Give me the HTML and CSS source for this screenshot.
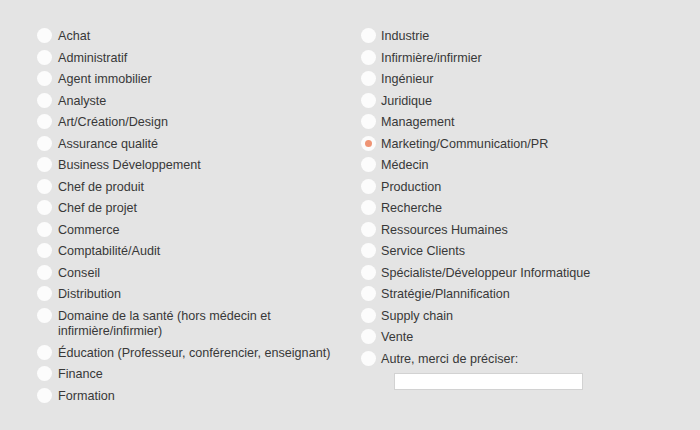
FILE: index.html
```html
<!DOCTYPE html>
<html lang="fr">
<head>
<meta charset="utf-8">
<title>Secteur</title>
<link rel="stylesheet" href="styles.css">
</head>
<body>
<form class="choices">
  <div class="col">
    <label class="row"><span class="radio"></span><span class="txt">Achat</span></label>
    <label class="row"><span class="radio"></span><span class="txt">Administratif</span></label>
    <label class="row"><span class="radio"></span><span class="txt">Agent immobilier</span></label>
    <label class="row"><span class="radio"></span><span class="txt">Analyste</span></label>
    <label class="row"><span class="radio"></span><span class="txt">Art/Création/Design</span></label>
    <label class="row"><span class="radio"></span><span class="txt">Assurance qualité</span></label>
    <label class="row"><span class="radio"></span><span class="txt">Business Développement</span></label>
    <label class="row"><span class="radio"></span><span class="txt">Chef de produit</span></label>
    <label class="row"><span class="radio"></span><span class="txt">Chef de projet</span></label>
    <label class="row"><span class="radio"></span><span class="txt">Commerce</span></label>
    <label class="row"><span class="radio"></span><span class="txt">Comptabilité/Audit</span></label>
    <label class="row"><span class="radio"></span><span class="txt">Conseil</span></label>
    <label class="row"><span class="radio"></span><span class="txt">Distribution</span></label>
    <label class="row"><span class="radio"></span><span class="txt">Domaine de la santé (hors médecin et<br>infirmière/infirmier)</span></label>
    <label class="row"><span class="radio"></span><span class="txt">Éducation (Professeur, conférencier, enseignant)</span></label>
    <label class="row"><span class="radio"></span><span class="txt">Finance</span></label>
    <label class="row"><span class="radio"></span><span class="txt">Formation</span></label>
  </div>
  <div class="col">
    <label class="row"><span class="radio"></span><span class="txt">Industrie</span></label>
    <label class="row"><span class="radio"></span><span class="txt">Infirmière/infirmier</span></label>
    <label class="row"><span class="radio"></span><span class="txt">Ingénieur</span></label>
    <label class="row"><span class="radio"></span><span class="txt">Juridique</span></label>
    <label class="row"><span class="radio"></span><span class="txt">Management</span></label>
    <label class="row"><span class="radio checked"></span><span class="txt">Marketing/Communication/PR</span></label>
    <label class="row"><span class="radio"></span><span class="txt">Médecin</span></label>
    <label class="row"><span class="radio"></span><span class="txt">Production</span></label>
    <label class="row"><span class="radio"></span><span class="txt">Recherche</span></label>
    <label class="row"><span class="radio"></span><span class="txt">Ressources Humaines</span></label>
    <label class="row"><span class="radio"></span><span class="txt">Service Clients</span></label>
    <label class="row"><span class="radio"></span><span class="txt">Spécialiste/Développeur Informatique</span></label>
    <label class="row"><span class="radio"></span><span class="txt">Stratégie/Plannification</span></label>
    <label class="row"><span class="radio"></span><span class="txt">Supply chain</span></label>
    <label class="row"><span class="radio"></span><span class="txt">Vente</span></label>
    <label class="row"><span class="radio"></span><span class="txt">Autre, merci de préciser:</span></label>
    <div class="other"><input class="other-input" type="text"></div>
  </div>
</form>
</body>
</html>
```
FILE: styles.css
```css
html, body {
  margin: 0;
  padding: 0;
  background: #e4e4e4;
}
body {
  font-family: "Liberation Sans", Arial, sans-serif;
  font-size: 12.6px;
  color: #383838;
  width: 700px;
  height: 430px;
  overflow: hidden;
}
.choices {
  display: grid;
  grid-template-columns: 324px 1fr;
  padding: 26px 0 0 37px;
  margin: 0;
}
.col {
  display: flex;
  flex-direction: column;
}
.row {
  display: flex;
  align-items: flex-start;
  gap: 6px;
  padding: 3px 0;
  line-height: 15.5px;
}
.col + .col .row {
  gap: 5px;
}
.radio {
  flex: none;
  width: 15px;
  height: 15px;
  margin-top: -1px;
  border-radius: 50%;
  background: #fcfcfc;
  display: flex;
  align-items: center;
  justify-content: center;
}
.radio.checked::after {
  content: "";
  width: 7px;
  height: 7px;
  border-radius: 50%;
  background: #ef9474;
}
.other {
  padding: 3px 0 0 33px;
}
.other-input {
  display: block;
  box-sizing: border-box;
  width: 189px;
  height: 17px;
  margin: 0;
  border: 1px solid #d2d2d2;
  background: #fff;
  padding: 0 3px;
  font: inherit;
}
```
